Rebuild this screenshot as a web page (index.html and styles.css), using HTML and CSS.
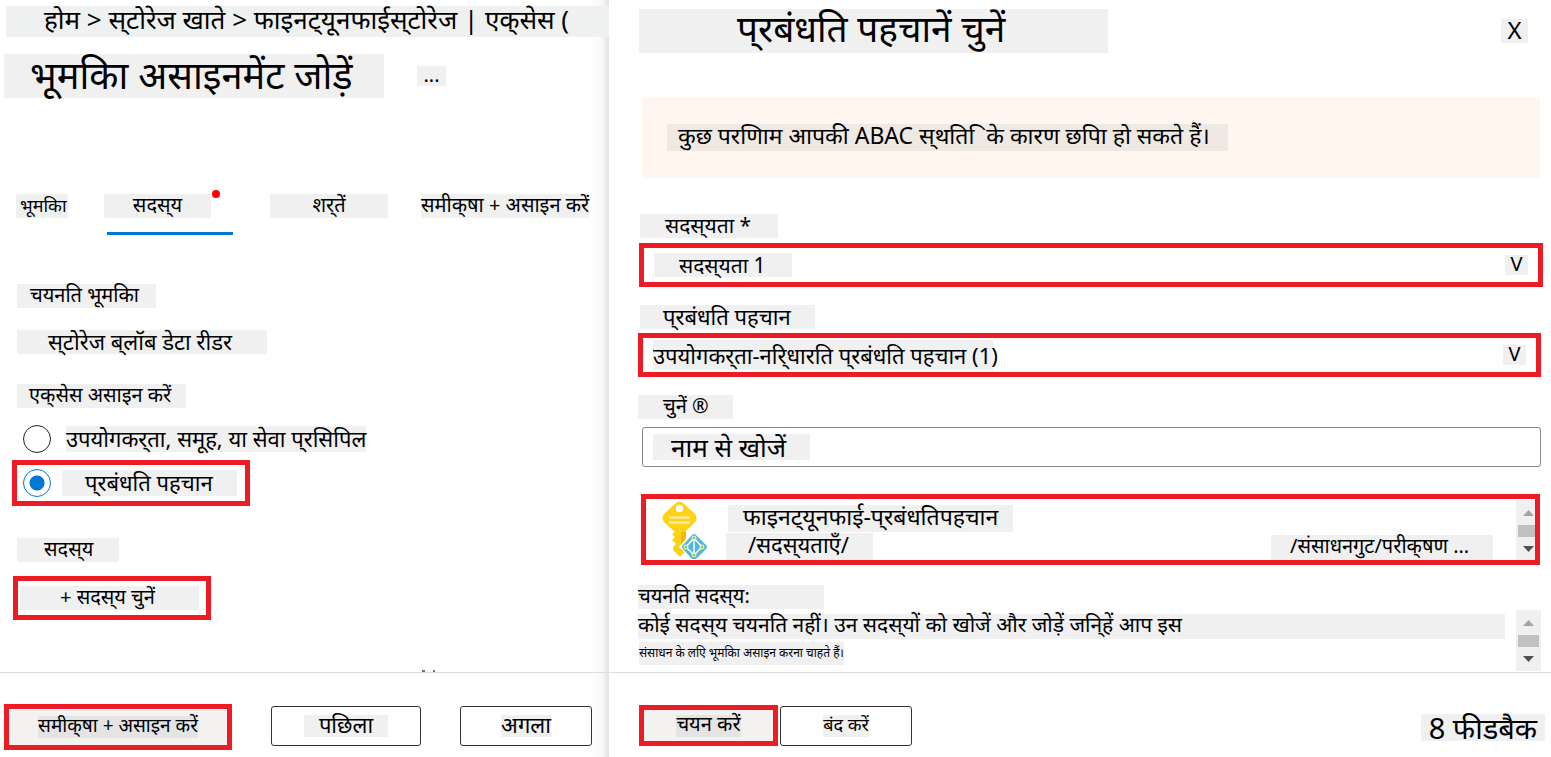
FILE: index.html
```
<!DOCTYPE html>
<html lang="hi">
<head>
<meta charset="utf-8">
<title>भूमिका असाइनमेंट जोड़ें</title>
<link rel="stylesheet" href="styles.css">
</head>
<body>
<div class="page">
  <section class="panel assign">
    <div class="panel-body">
      <nav class="breadcrumb">होम &gt; स्&zwnj;टोरेज खाते &gt; फाइनट्&zwnj;यूनफाईस्&zwnj;टोरेज | एक्&zwnj;सेस (</nav>
      <header class="title-row">
        <h1 class="chip title">भूमकिा असाइनमेंट जोड़ें</h1>
        <button class="chip more" type="button">...</button>
      </header>
      <div class="tabs" role="tablist">
        <button class="tab tab-role" role="tab" type="button"><span class="chip">भूमकिा</span></button>
        <button class="tab tab-members" role="tab" type="button" aria-selected="true"><span class="chip">सदस्&zwnj;य</span><i class="dot"></i></button>
        <button class="tab tab-conditions" role="tab" type="button"><span class="chip">शर्&zwnj;तें</span></button>
        <button class="tab tab-review" role="tab" type="button"><span class="chip">समीक्&zwnj;षा + असाइन करें</span></button>
      </div>
      <div class="details">
        <div class="chip role-label">चयनति भूमकिा</div>
        <div class="chip role-value">स्&zwnj;टोरेज ब्&zwnj;लॉब डेटा रीडर</div>
        <fieldset class="access">
          <legend class="chip access-label">एक्&zwnj;सेस असाइन करें</legend>
          <label class="choice"><input type="radio" name="access"><span class="chip">उपयोगकर्&zwnj;ता, समूह, या सेवा प्&zwnj;रसिपिल</span></label>
          <label class="choice marked choice-managed"><input type="radio" name="access" checked><span class="chip">प्&zwnj;रबंधति पहचान</span></label>
        </fieldset>
        <div class="chip members-label">सदस्&zwnj;य</div>
        <button class="marked add-member" type="button"><span class="chip">+ सदस्&zwnj;य चुनें</span></button>
      </div>
      <svg class="cut-marks" width="14" height="2" viewBox="0 0 14 2" aria-hidden="true"><path d="M0 1h3M11 1h2" stroke="#444" stroke-width="1.4"/></svg>
    </div>
    <footer class="panel-footer">
      <button class="btn marked btn-review" type="button"><span class="chip">समीक्&zwnj;षा + असाइन करें</span></button>
      <button class="btn btn-prev" type="button"><span class="chip">पछिला</span></button>
      <button class="btn btn-next" type="button"><span class="chip">अगला</span></button>
    </footer>
  </section>

  <section class="panel identities">
    <div class="panel-body">
      <header class="side-head">
        <h2 class="chip side-title">प्&zwnj;रबंधति पहचानें चुनें</h2>
        <button class="chip close" type="button">X</button>
      </header>
      <div class="banner"><p class="chip">कुछ परणिाम आपकी ABAC स्&zwnj;थति&nbsp;ि के कारण छपिा हो सकते हैं।</p></div>

      <label class="chip field-label label-sub" for="subscription">सदस्&zwnj;यता *</label>
      <div class="marked field field-sub">
        <select class="select select-sub" id="subscription"><option>सदस्&zwnj;यता 1</option></select>
        <span class="chip caret">V</span>
      </div>

      <label class="chip field-label label-identity" for="identity">प्&zwnj;रबंधति पहचान</label>
      <div class="marked field">
        <select class="select select-identity" id="identity"><option>उपयोगकर्&zwnj;ता-नरि्&zwnj;धारति प्&zwnj;रबंधति पहचान (1)</option></select>
        <span class="chip caret">V</span>
      </div>

      <label class="chip field-label label-pick" for="search">चुनें ®</label>
      <input class="search" id="search" type="text" value="नाम से खोजें">

      <div class="marked result">
        <svg class="key" width="48" height="60" viewBox="0 0 48 60" aria-hidden="true">
          <path d="M15 4 Q18.500 1 22 4 L34 15 Q37 19 34 23 L25 32 V52 L19 58 L12 51 V48 L15 45 L11 41 L14 38 L11 35 L14 33 L3 23 Q0 19 3 15 Z" fill="#fdd116"/>
          <path d="M20 33h5v14l-5 6z" fill="#f5b800"/>
          <circle cx="18.500" cy="9.500" r="3.700" fill="#fff"/>
          <path d="M8 18.500h21M8 23.500h21" stroke="#fbe9a0" stroke-width="2.500"/>
          <path d="M33 33 46 46 33 60 20 48Z" fill="#fff" stroke="#fff" stroke-width="3"/>
          <path d="M31 36 Q33 34 35 36 L45 46 Q47 48 45 50 L35 60 H31 L22 50 Q20 48 22 46Z" fill="#57b5dc"/>
          <path d="M33 39v17M33 39 25 48 33 56 41 48Z" fill="none" stroke="#fff" stroke-width="1.400"/>
          <g fill="#a5cf2e" stroke="#fff" stroke-width=".8"><circle cx="33" cy="39" r="2"/><circle cx="25" cy="48" r="2"/><circle cx="41" cy="48" r="2"/><circle cx="33" cy="56" r="2"/></g>
        </svg>
        <div class="result-text">
          <div class="chip result-name">फाइनट्&zwnj;यूनफाई-प्&zwnj;रबंधतिपहचान</div>
          <div class="result-path"><span class="chip path-sub">/सदस्&zwnj;यताएँ/</span><span class="chip path-group">/संसाधनगुट/परीक्&zwnj;षण ...</span></div>
        </div>
        <svg class="scroll" width="24" height="61" viewBox="0 0 24 61" aria-hidden="true"><path fill="#f0f0f0" d="M0 1h24v60H0z"/><path fill="#a3a3a3" d="M7 17h11l-5.500-6z"/><path fill="#c1c1c1" d="M2 26h21v12H2z"/><path fill="#505050" d="M7 47h11l-5.500 6z"/></svg>
      </div>

      <div class="chosen">
        <h3 class="chip chosen-title">चयनति सदस्&zwnj;य:</h3>
        <p class="chip chosen-text">कोई सदस्&zwnj;य चयनति नहीं। उन सदस्&zwnj;यों को खोजें और जोड़ें जनि्&zwnj;हें आप इस</p>
        <p class="chip chosen-note">संसाधन के लएि भूमकिा असाइन करना चाहते हैं।</p>
        <svg class="scroll chosen-scroll" width="25" height="61" viewBox="0 0 25 61" aria-hidden="true"><path fill="#f0f0f0" d="M0 0h25v61H0z"/><path fill="#a3a3a3" d="M7 16h11l-5.500-6z"/><path fill="#c1c1c1" d="M2 25h21v12H2z"/><path fill="#505050" d="M7 46h11l-5.500 6z"/></svg>
      </div>
    </div>
    <footer class="panel-footer">
      <button class="btn marked btn-select" type="button"><span class="chip">चयन करें</span></button>
      <button class="btn btn-close" type="button"><span class="chip">बंद करें</span></button>
      <a class="chip feedback" href="#feedback">8 फीडबैक</a>
    </footer>
  </section>
</div>
</body>
</html>
```
FILE: styles.css
```
* { box-sizing: border-box; }
body {
  margin: 0;
  background: #fff;
  color: #000;
  font-family: "Noto Sans", "Noto Sans Devanagari", sans-serif;
  font-size: 20px;
  line-height: 22px;
}
button, input, select {
  font: inherit;
  color: inherit;
  margin: 0;
  padding: 0;
  border: 0;
  background: none;
}
h1, h2, h3, p { margin: 0; font-weight: 400; }

.page {
  display: grid;
  grid-template-columns: 609fr 942fr;
  min-height: 100vh;
}
.panel { display: flex; flex-direction: column; min-width: 0; }
.panel-body { flex: 1; display: flex; flex-direction: column; align-items: flex-start; }
.panel-footer {
  height: 85px;
  border-top: 1px solid #dcdcdc;
  display: flex;
  align-items: flex-start;
}
.chip { background: #f0f0f0; white-space: nowrap; display: block; padding-bottom: 2px; }
.marked { border: 5px solid #ed1c24; }

.assign { background: linear-gradient(to left, #e2e2e2, #f8f8f8 7px, #fff 18px); }

.breadcrumb {
  align-self: stretch;
  margin: 6px 0 0 6px;
  padding: 0 0 4px 38px;
  background: #eff1f0;
  font-size: 26px;
  line-height: 27px;
  white-space: nowrap;
}
.title-row { display: flex; align-items: flex-start; margin: 17px 0 0 4px; }
.title { width: 380px; padding-left: 26px; padding-bottom: 4px; font-size: 38px; line-height: 40px; }
.more { width: 29px; margin: 12px 0 0 33px; line-height: 18px; }

.tabs { display: flex; align-items: flex-start; margin: 96px 0 0 16px; height: 41px; }
.tab { position: relative; height: 41px; display: flex; align-items: flex-start; }
.tab-role .chip { width: 52px; padding-left: 4px; text-align: left; font-size: 18px; }
.tab-members { width: 129px; margin-left: 36px; }
.tab-members .chip { width: 107px; }
.tab-members::after {
  content: "";
  position: absolute;
  left: 3px;
  right: 0;
  bottom: 0;
  height: 3px;
  background: #0078d4;
}
.dot {
  position: absolute;
  left: 108px;
  top: -4px;
  width: 8px;
  height: 8px;
  border-radius: 50%;
  background: #f00;
}
.tab-conditions { margin-left: 37px; }
.tab-conditions .chip { width: 118px; }
.tab-review { margin-left: 33px; }

.details { padding: 49px 0 0 17px; }
.role-label { width: 139px; padding-left: 13px; }
.role-value { width: 250px; margin-top: 22px; padding-left: 31px; font-size: 22px; }
.access { margin: 30px 0 0; padding: 0; border: 0; }
.access-label { width: 169px; padding: 0 0 2px 12px; }
.choice { display: flex; align-items: center; height: 46px; margin-top: 8px; padding-left: 6px; }
.choice .chip { margin-left: 15px; font-size: 22px; line-height: 24px; }
.choice input {
  appearance: none;
  width: 28px;
  height: 28px;
  border: 1px solid #222;
  border-radius: 50%;
  background: #fff;
}
.choice input:checked {
  border-color: #0078d4;
  background: radial-gradient(circle, #0078d4 7px, #fff 8px);
}
.choice-managed { width: 238px; margin: -2px 0 0 -5px; }
.choice-managed .chip { width: 175px; margin-left: 11px; padding-left: 23px; }
.members-label { width: 102px; margin-top: 32px; padding-left: 27px; }
.add-member { width: 198px; height: 44px; margin: 14px 0 0 -4px; padding-left: 2px; }
.add-member .chip { width: 179px; padding-left: 40px; text-align: left; }
.cut-marks { margin: auto 0 0 422px; }

.btn { height: 40px; border: 1px solid #333; border-radius: 3px; display: flex; align-items: center; justify-content: center; }
.btn .chip { line-height: 18px; padding-bottom: 4px; }
.btn.marked { border: 5px solid #ed1c24; border-radius: 0; background: #f3f2f1; }
.btn.marked .chip { background: #e4e4e4; }
.btn-review { width: 228px; height: 46px; margin: 31px 0 0 4px; font-size: 19px; }
.btn-prev { width: 150px; margin: 33px 0 0 39px; }
.btn-prev .chip { width: 84px; font-size: 22px; }
.btn-next { width: 132px; margin: 33px 0 0 39px; font-size: 22px; }

.identities .panel-body { padding: 9px 10px 0 29px; align-items: stretch; }
.side-head { display: flex; justify-content: space-between; align-items: center; margin: 0 13px 0 1px; }
.side-title { width: 469px; padding-left: 98px; padding-bottom: 6px; font-size: 37px; line-height: 38px; }
.close { width: 27px; font-size: 24px; }
.banner {
  display: flex;
  align-items: center;
  height: 81px;
  margin: 44px 1px 0 4px;
  padding-left: 25px;
  border-radius: 3px;
  background: #fff6f0;
}
.banner .chip { width: 561px; padding-left: 11px; padding-bottom: 4px; background: #efe9e3; font-size: 23px; line-height: 23px; }
.field-label { align-self: flex-start; padding-left: 25px; }
.label-sub { width: 138px; margin: 36px 0 5px 2px; font-size: 21px; }
.label-identity { width: 175px; margin: 18px 0 4px 2px; padding-left: 23px; font-size: 22px; }
.label-pick { width: 95px; margin: 18px 0 8px; }
.field { display: flex; align-items: center; height: 44px; padding: 0 10px; }
.field-sub { margin: 0 -2px 0 1px; }
.select {
  flex: 1;
  min-width: 0;
  height: 34px;
  line-height: 32px;
  appearance: none;
  background: linear-gradient(#f0f0f0, #f0f0f0) left center no-repeat;
}
.select-sub { padding-left: 25px; background-size: 138px 24px; font-size: 21px; }
.select-identity { background-size: 340px 30px; font-size: 22px; }
.caret { width: 23px; line-height: 18px; text-align: center; }
.search {
  height: 40px;
  margin-left: 4px;
  padding-left: 28px;
  border: 1px solid #888;
  border-radius: 3px;
  background: linear-gradient(#f0f0f0, #f0f0f0) 10px center / 157px 26px no-repeat;
  font-size: 26px;
}
.result { display: flex; height: 71px; margin: 27px 1px 0 3px; }
.key { margin-left: 15px; }
.result-text { flex: 1; margin: 6px 23px 0 17px; font-size: 22px; line-height: 23px; }
.result-text .chip { padding-bottom: 4px; }
.result-name { width: 285px; margin-left: 2px; padding-left: 15px; font-size: 23px; }
.result-path { display: flex; justify-content: space-between; align-items: flex-start; margin-top: 1px; }
.path-sub { width: 147px; padding-left: 22px; }
.path-group { width: 222px; margin-top: 2px; padding-left: 19px; font-size: 20px; line-height: 21px; }
.result .scroll { margin-right: -5px; clip-path: inset(0 5px 0 0); }
.chosen { position: relative; margin-top: 20px; }
.chosen-title { width: 186px; font-size: 20px; }
.chosen-text { margin: 5px 36px 0 0; padding-bottom: 4px; font-size: 21px; line-height: 21px; }
.chosen-note { width: 205px; margin: 3px 0 0 1px; font-size: 12px; line-height: 21px; }
.chosen-scroll { position: absolute; right: 0; top: 25px; }
.identities .panel-footer { padding: 32px 6px 0 30px; }
.btn-select { width: 139px; height: 41px; }
.btn-close { width: 132px; margin: 1px 0 0 2px; font-size: 18px; }
.feedback { margin: 9px 0 0 auto; padding: 0 8px; color: #000; font-size: 29px; line-height: 27px; text-decoration: none; }
```
